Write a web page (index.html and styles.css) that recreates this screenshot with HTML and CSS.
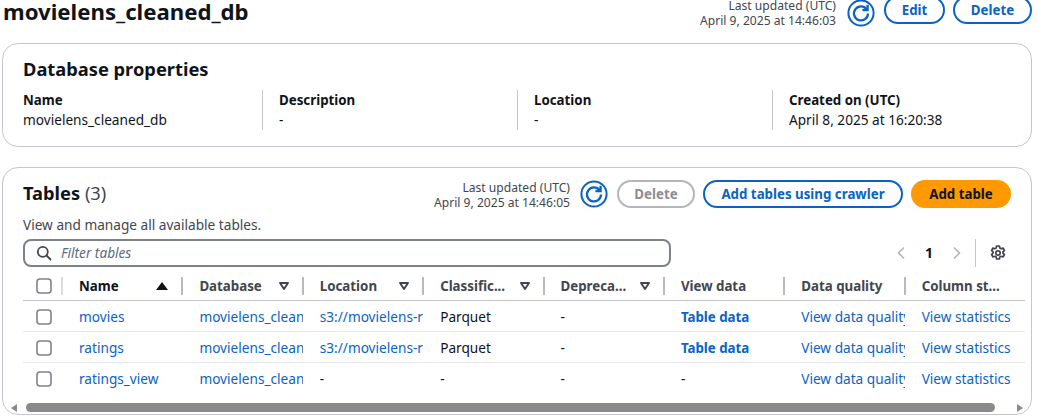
FILE: index.html
```html
<!DOCTYPE html>
<html lang="en">
<head>
  <meta charset="UTF-8">
  <title>movielens_cleaned_db</title>
  <link rel="stylesheet" href="styles.css">
</head>
<body>
  <svg class="defs" width="0" height="0">
    <symbol id="refresh" viewBox="0 0 28 28">
      <circle cx="14" cy="14" r="12.6" fill="none" stroke="#0a63c4" stroke-width="2"/>
      <path d="M19.6 10.2A7 7 0 1 0 21 14.5" fill="none" stroke="#0a63c4" stroke-width="2.3"/>
      <path d="M20.6 5.8v5.2h-5.2" fill="none" stroke="#0a63c4" stroke-width="2.3"/>
    </symbol>
    <symbol id="chk" viewBox="0 0 16 16">
      <rect x="1" y="1" width="14" height="14" rx="3" fill="#fff" stroke="#7d8188" stroke-width="1.6"/>
    </symbol>
    <symbol id="sortdown" viewBox="0 0 10 8">
      <path d="M1 1h8L5 7z" fill="none" stroke="#424650" stroke-width="1.9" stroke-linejoin="round"/>
    </symbol>
  </svg>

  <header class="page-head">
    <h1>movielens_cleaned_db</h1>
    <div class="actions">
      <div class="stamp">Last updated (UTC)<br>April 9, 2025 at 14:46:03</div>
      <svg class="refresh"><use href="#refresh"/></svg>
      <button class="btn btn-edit">Edit</button>
      <button class="btn btn-del">Delete</button>
    </div>
  </header>

  <section class="card props">
    <h2>Database properties</h2>
    <div class="prop-row">
      <div class="prop"><b>Name</b><span>movielens_cleaned_db</span></div>
      <div class="prop"><b>Description</b><span>-</span></div>
      <div class="prop"><b>Location</b><span>-</span></div>
      <div class="prop"><b>Created on (UTC)</b><span>April 8, 2025 at 16:20:38</span></div>
    </div>
  </section>

  <section class="card tables">
    <div class="tables-head">
      <h2>Tables <span class="count">(3)</span></h2>
      <div class="actions">
        <div class="stamp">Last updated (UTC)<br>April 9, 2025 at 14:46:05</div>
        <svg class="refresh"><use href="#refresh"/></svg>
        <button class="btn btn-off">Delete</button>
        <button class="btn btn-crawl">Add tables using crawler</button>
        <button class="btn btn-add">Add table</button>
      </div>
    </div>
    <p class="sub">View and manage all available tables.</p>
    <div class="tools">
      <div class="filter">
        <svg width="16" height="16" viewBox="0 0 16 16"><circle cx="6.8" cy="6.8" r="5" fill="none" stroke="#424650" stroke-width="1.8"/><path d="M10.5 10.5L15 15" stroke="#424650" stroke-width="1.8"/></svg>
        <span>Filter tables</span>
      </div>
      <div class="pager">
        <svg width="10" height="14" viewBox="0 0 10 14"><path d="M8 1.5L2.500 7 8 12.500" fill="none" stroke="#b4b4bb" stroke-width="1.6"/></svg>
        <b>1</b>
        <svg width="10" height="14" viewBox="0 0 10 14"><path d="M2 1.500L7.500 7 2 12.500" fill="none" stroke="#b4b4bb" stroke-width="1.6"/></svg>
        <i class="pager-sep"></i>
        <svg width="16" height="16" viewBox="0 0 16 16"><path d="M6.6 1h2.800l.4 2 1.300.7 1.900-.7 1.400 2.500-1.500 1.300v1.400l1.500 1.300-1.400 2.500-1.900-.7-1.300.7-.4 2H6.600l-.4-2-1.300-.7-1.900.7-1.400-2.500 1.500-1.300V6.800L1.600 5.500 3 3l1.900.7 1.300-.7z" fill="none" stroke="#424650" stroke-width="1.700" stroke-linejoin="round"/><circle cx="8" cy="8" r="2.200" fill="none" stroke="#424650" stroke-width="1.700"/></svg>
      </div>
    </div>
    <table>
      <colgroup>
        <col class="c-check"><col><col><col><col><col><col><col><col>
      </colgroup>
      <thead>
        <tr>
          <th><svg class="chk"><use href="#chk"/></svg></th>
          <th><div class="th">Name<svg width="12" height="8" viewBox="0 0 12 8"><path d="M6 0l6 8H0z" fill="#0f141a"/></svg></div></th>
          <th><div class="th">Database<svg width="10" height="8"><use href="#sortdown"/></svg></div></th>
          <th><div class="th">Location<svg width="10" height="8"><use href="#sortdown"/></svg></div></th>
          <th><div class="th">Classific...<svg width="10" height="8"><use href="#sortdown"/></svg></div></th>
          <th><div class="th">Depreca...<svg width="10" height="8"><use href="#sortdown"/></svg></div></th>
          <th><div class="th">View data</div></th>
          <th><div class="th">Data quality</div></th>
          <th><div class="th last">Column st...</div></th>
        </tr>
      </thead>
      <tbody>
        <tr>
          <td><svg class="chk"><use href="#chk"/></svg></td>
          <td><div class="cell"><a>movies</a></div></td>
          <td><div class="cell"><a>movielens_cleaned_db</a></div></td>
          <td><div class="cell"><a>s3://movielens-raw-data</a></div></td>
          <td><div class="cell">Parquet</div></td>
          <td><div class="cell">-</div></td>
          <td><div class="cell"><a class="strong">Table data</a></div></td>
          <td><div class="cell"><a>View data quality</a></div></td>
          <td><div class="cell"><a>View statistics</a></div></td>
        </tr>
        <tr>
          <td><svg class="chk"><use href="#chk"/></svg></td>
          <td><div class="cell"><a>ratings</a></div></td>
          <td><div class="cell"><a>movielens_cleaned_db</a></div></td>
          <td><div class="cell"><a>s3://movielens-raw-data</a></div></td>
          <td><div class="cell">Parquet</div></td>
          <td><div class="cell">-</div></td>
          <td><div class="cell"><a class="strong">Table data</a></div></td>
          <td><div class="cell"><a>View data quality</a></div></td>
          <td><div class="cell"><a>View statistics</a></div></td>
        </tr>
        <tr>
          <td><svg class="chk"><use href="#chk"/></svg></td>
          <td><div class="cell"><a>ratings_view</a></div></td>
          <td><div class="cell"><a>movielens_cleaned_db</a></div></td>
          <td><div class="cell">-</div></td>
          <td><div class="cell">-</div></td>
          <td><div class="cell">-</div></td>
          <td><div class="cell">-</div></td>
          <td><div class="cell"><a>View data quality</a></div></td>
          <td><div class="cell"><a>View statistics</a></div></td>
        </tr>
      </tbody>
    </table>
    <div class="scroll">
      <i class="arr-l"></i>
      <div class="thumb"></div>
      <i class="arr-r"></i>
    </div>
  </section>
</body>
</html>
```

FILE: styles.css
```css
html, body {
  height: 416px;
  overflow: hidden;
}
body {
  margin: 0;
  background: #fff;
  color: #0f141a;
  font-family: "Noto Sans", Arial, sans-serif;
  font-size: 13.65px;
  line-height: 16px;
}
b, th {
  font-size: 13.3px;
}
.defs {
  position: absolute;
}
.page-head {
  display: flex;
  justify-content: space-between;
  height: 43px;
  padding: 0 6px 0 3px;
}
h1 {
  margin: 0;
  font-size: 22.2px;
  line-height: 24px;
  font-weight: 700;
}
h2 {
  margin: 0;
  font-size: 18.3px;
  line-height: 24px;
  font-weight: 700;
}
.actions {
  display: flex;
  align-items: flex-start;
}
.stamp {
  color: #424650;
  font-size: 12.1px;
  line-height: 15px;
  text-align: right;
  margin-right: 11px;
}
.page-head .stamp {
  margin-top: -2px;
}
.tables .stamp {
  margin-right: 10px;
}
.refresh {
  width: 28px;
  height: 28px;
  margin-right: 9px;
}
.btn {
  font: 700 13.3px/16px "Noto Sans", Arial, sans-serif;
  height: 28px;
  padding: 0;
  border-radius: 14px;
  border: 2px solid #0a63c4;
  background: #fff;
  color: #0a63c4;
}
.page-head .btn {
  margin-top: -4px;
}
.page-head .refresh {
  margin-top: -1px;
}
.btn-edit {
  width: 61px;
  margin-right: 8px;
}
.btn-del {
  width: 79px;
}
.btn-off {
  width: 78px;
  border-color: #b4b4bb;
  color: #8c8c94;
  margin-right: 8px;
}
.btn-crawl {
  width: 200px;
  margin-right: 8px;
}
.btn-add {
  width: 100px;
  background: #ff9900;
  border-color: #ff9900;
  color: #0f141a;
}
.card {
  margin: 0 6px 0 2px;
  border: 1px solid #c6c6cd;
  border-radius: 16px;
  box-sizing: border-box;
}
.props {
  height: 104px;
  padding: 13px 20px 0;
  margin-bottom: 20px;
}
.prop-row {
  display: grid;
  grid-template-columns: 239px repeat(3, 255px);
  margin-top: 9px;
}
.prop {
  height: 40px;
  border-left: 1px solid #c6c6cd;
  padding-left: 16px;
  line-height: 20px;
}
.prop:first-child {
  border-left: 0;
  padding-left: 0;
}
.prop b, .prop span {
  display: block;
}
.tables {
  height: 248px;
  padding: 12px 20px 0;
  overflow: hidden;
}
.tables-head {
  display: flex;
  justify-content: space-between;
  align-items: flex-start;
}
.tables-head h2 {
  margin-top: 1px;
}
.count {
  font-weight: 400;
  color: #424650;
}
.sub {
  margin: 7px 0 6px;
  color: #424650;
  line-height: 16px;
}
.tools {
  display: flex;
  justify-content: space-between;
  align-items: center;
  height: 28px;
}
.filter {
  width: 648px;
  height: 28px;
  box-sizing: border-box;
  border: 2px solid #7d8188;
  border-radius: 8px;
  display: flex;
  align-items: center;
  gap: 9px;
  padding-left: 11px;
  color: #5f6b7a;
  font-style: italic;
}
.pager {
  display: flex;
  align-items: center;
  margin-right: 5px;
}
.pager b {
  width: 46px;
  text-align: center;
  font-size: 14px;
}
.pager-sep {
  width: 1px;
  height: 28px;
  background: #c6c6cd;
  margin: 0 14px 0 13px;
}
table {
  width: 1002px;
  margin-top: 4px;
  border-collapse: collapse;
  table-layout: fixed;
}
.c-check {
  width: 39px;
}
th {
  height: 29px;
  padding: 0;
  border-bottom: 1px solid #c6c6cd;
  text-align: left;
  color: #424650;
  font-weight: 700;
}
th:nth-child(2) {
  color: #0f141a;
}
td {
  height: 28px;
  padding: 2px 0 0;
  border-bottom: 1px solid #e8e8ec;
}
tbody tr:last-child td {
  border-bottom: 0;
}
th:first-child, td:first-child {
  padding-left: 13px;
}
.chk {
  display: block;
  width: 16px;
  height: 16px;
}
.th {
  display: flex;
  justify-content: space-between;
  align-items: center;
  height: 18px;
  padding: 0 14px 0 16px;
  border-left: 2px solid #b9b9c0;
  margin-left: -1px;
}
th:nth-child(2) .th {
  border-left-color: #dcdce0;
}
.th.last {
  padding-right: 0;
}
.cell {
  padding-left: 17px;
  line-height: 22px;
  overflow: hidden;
  white-space: nowrap;
}
a {
  color: #0a63c4;
}
.strong {
  font-weight: 700;
  font-size: 13.3px;
}
.scroll {
  display: flex;
  align-items: center;
  height: 9px;
  margin: 10px -20px 0;
}
.arr-l {
  border: solid transparent;
  border-width: 4px 6px 4px 0;
  border-right-color: #8a8a8a;
  margin: 0 9px 0 8px;
}
.thumb {
  flex: 1;
  height: 9px;
  border-radius: 5px;
  background: #8a8a8a;
}
.arr-r {
  border: solid transparent;
  border-width: 4px 0 4px 6px;
  border-left-color: #8a8a8a;
  margin: 0 8px 0 22px;
}
```
